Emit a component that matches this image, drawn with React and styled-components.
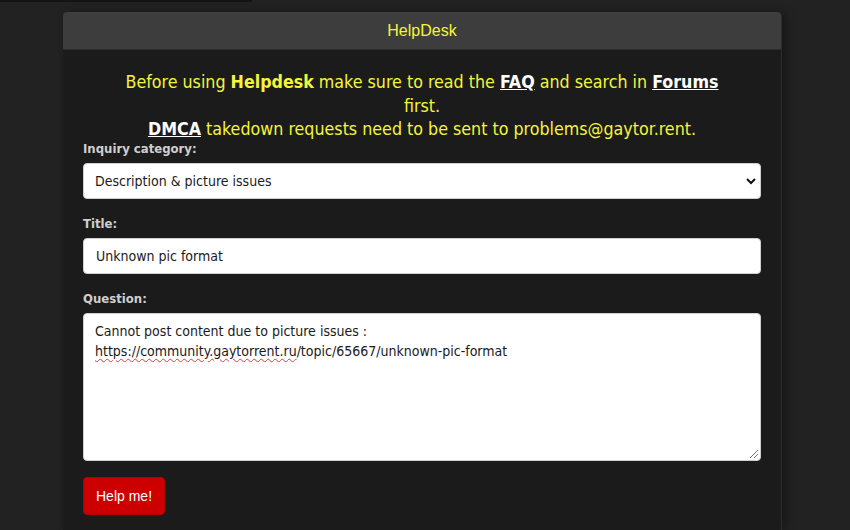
import React from 'react';
import styled, { createGlobalStyle } from 'styled-components';

const GlobalStyle = createGlobalStyle`
  html, body {
    margin: 0;
    padding: 0;
    background: #222222;
    height: 100%;
    overflow: hidden;
  }
  body {
    font-family: "DejaVu Sans Condensed", "DejaVu Sans", sans-serif;
  }
`;

const Page = styled.div`
  position: relative;
  min-height: 530px;
  padding-top: 12px;
`;

const TopStrip = styled.div`
  position: absolute;
  left: 0;
  top: 0;
  width: 252px;
  height: 2px;
  background: #141414;
`;

const Panel = styled.div`
  width: 718px;
  margin-left: 63px;
  background: #1b1b1b;
  border-radius: 4px 4px 0 0;
  border-right: 1px solid #2c2c2c;
  box-shadow: 4px 0 10px rgba(0, 0, 0, 0.35);
  min-height: 518px;
`;

const Header = styled.div`
  height: 37px;
  background: #3d3d3d;
  border-radius: 4px 4px 0 0;
  border-bottom: 1px solid #2e2e2e;
  color: #f5f53a;
  font-family: "Liberation Sans", Arial, sans-serif;
  font-size: 16px;
  display: flex;
  align-items: center;
  justify-content: center;
`;

const Body = styled.div`
  padding: 20px 20px 0 20px;
`;

const Intro = styled.div`
  color: #f5f53a;
  font-size: 17.7px;
  line-height: 23.5px;
  text-align: center;
  padding: 1px 30px 0;
  margin-bottom: -1px;
`;

const IntroLink = styled.a`
  color: #ffffff;
  font-weight: bold;
  text-decoration: underline;
`;

const Strong = styled.b`
  font-weight: bold;
`;

const Field = styled.div`
  margin-bottom: 17px;
`;

const Label = styled.label`
  display: block;
  color: #cfcfcf;
  font-weight: bold;
  font-size: 13px;
  line-height: 16px;
  margin-bottom: 6px;
`;

const controlBase = `
  box-sizing: border-box;
  width: 100%;
  background: #ffffff;
  border: 1px solid #cfcfcf;
  border-radius: 4px;
  font-family: "DejaVu Sans Condensed", "DejaVu Sans", sans-serif;
  font-size: 14px;
  color: #1a1a1a;
  outline: none;
`;

const SelectBox = styled.div`
  position: relative;
`;

const Select = styled.select`
  ${controlBase}
  height: 36px;
  padding: 0 30px 0 11px;
  appearance: none;
`;

const Chevron = styled.svg`
  position: absolute;
  right: 4px;
  top: 14px;
  pointer-events: none;
`;

const Input = styled.input`
  ${controlBase}
  height: 36px;
  padding: 0 12px;
`;

const TextArea = styled.div`
  ${controlBase}
  position: relative;
  height: 148px;
  padding: 7px 11px;
  line-height: 20px;

  &::after {
    content: '';
    position: absolute;
    right: 2px;
    bottom: 2px;
    width: 8px;
    height: 8px;
    background: linear-gradient(
      135deg,
      transparent 45%,
      #777 45%,
      #777 52%,
      transparent 52%,
      transparent 70%,
      #777 70%,
      #777 77%,
      transparent 77%
    );
  }
`;

const Squiggle = styled.span`
  text-decoration: underline wavy #d04040;
  text-decoration-thickness: 1px;
  text-underline-offset: 2px;
`;

const SubmitButton = styled.button`
  margin-top: -1px;
  height: 38px;
  padding: 0 12px;
  background: #cc0000;
  color: #ffffff;
  border: 1px solid #b00000;
  border-radius: 4px;
  font-family: "Liberation Sans", Arial, sans-serif;
  font-size: 14px;
  cursor: pointer;
`;

const App = () => {
  return (
    <Page>
      <GlobalStyle />
      <TopStrip />
      <Panel>
        <Header>HelpDesk</Header>
        <Body>
          <Intro>
            Before using <Strong>Helpdesk</Strong> make sure to read the{' '}
            <IntroLink href="#">FAQ</IntroLink> and search in{' '}
            <IntroLink href="#">Forums</IntroLink> first.
            <br />
            <IntroLink href="#">DMCA</IntroLink> takedown requests need to be
            sent to problems@gaytor.rent.
          </Intro>
          <Field>
            <Label>Inquiry category:</Label>
            <SelectBox>
              <Select defaultValue="pic">
                <option value="pic">Description &amp; picture issues</option>
              </Select>
              <Chevron width="12" height="8" viewBox="0 0 12 8">
                <path
                  d="M2 2 L6 6 L10 2"
                  fill="none"
                  stroke="#111"
                  strokeWidth="2"
                />
              </Chevron>
            </SelectBox>
          </Field>
          <Field>
            <Label>Title:</Label>
            <Input defaultValue="Unknown pic format" />
          </Field>
          <Field>
            <Label>Question:</Label>
            <TextArea contentEditable suppressContentEditableWarning>
              Cannot post content due to picture issues :
              <br />
              <Squiggle>https://community.gaytorrent.ru</Squiggle>
              /topic/65667/unknown-pic-format
            </TextArea>
          </Field>
          <SubmitButton>Help me!</SubmitButton>
        </Body>
      </Panel>
    </Page>
  );
};

export default App;
